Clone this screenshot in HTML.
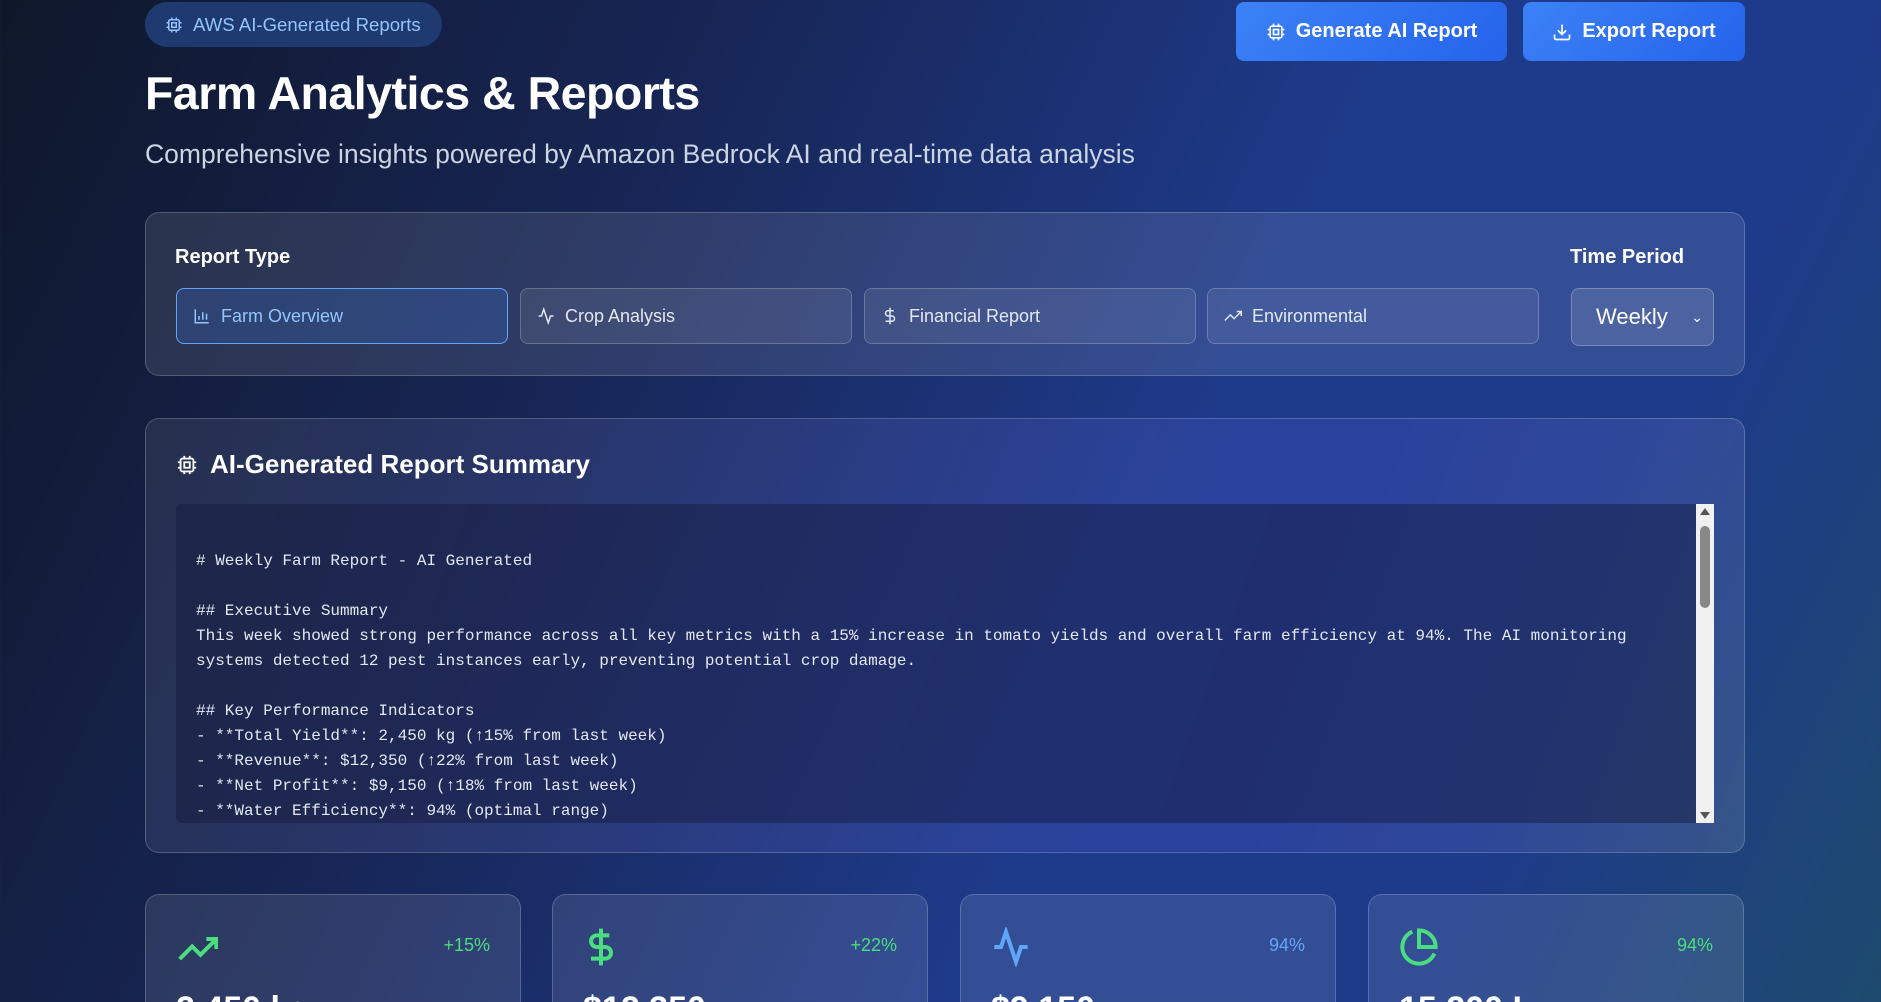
<!DOCTYPE html>
<html><head><meta charset="utf-8"><style>
*{box-sizing:border-box;margin:0;padding:0}
html,body{width:1881px;height:1002px;overflow:hidden}
body{font-family:"Liberation Sans",sans-serif;color:#fff;position:relative;
background:linear-gradient(115deg,#0f172a 0%,#172554 30%,#1e3a8a 60%,#1e3a8a 80%,#1e4a6e 100%);}
.a{position:absolute}
.badge{left:145px;top:2px;width:297px;height:45px;border-radius:23px;background:#1e3a70;color:#93c5fd;font-size:18.6px;display:flex;align-items:center;padding-left:20px;gap:10px;white-space:nowrap}
h1{position:absolute;left:145px;top:66px;font-size:46.5px;font-weight:700;letter-spacing:-0.5px}
.sub{left:145px;top:139px;font-size:26.5px;color:#cbd5e1;white-space:nowrap}
.btn{top:2px;height:59px;border-radius:8px;background:linear-gradient(135deg,#3b82f6,#2563eb);display:flex;align-items:center;justify-content:center;gap:10px;font-size:20px;font-weight:700}
.panel{left:145px;width:1600px;border-radius:14px;background:rgba(255,255,255,0.1);border:1px solid rgba(255,255,255,0.2)}
.lbl{font-size:20px;font-weight:700}
.tab{top:288px;width:332px;height:56px;border-radius:8px;background:rgba(255,255,255,0.08);border:1px solid rgba(255,255,255,0.22);display:flex;align-items:center;padding-left:16px;gap:10px;font-size:18px;color:#e2e8f0}
.tab.on{background:rgba(59,130,246,0.2);border-color:#60a5fa;color:#93c5fd}
.sel{left:1571px;top:288px;width:143px;height:58px;border-radius:8px;background:rgba(255,255,255,0.12);border:1px solid rgba(255,255,255,0.25);font-size:22px;display:flex;align-items:center;padding-left:24px}
pre{position:absolute;left:176px;top:504px;width:1538px;height:319px;background:rgba(20,25,60,0.45);border-radius:6px;font-family:"Liberation Mono",monospace;font-size:16px;line-height:25px;color:#e2e8f0;padding:20px 20px;overflow:hidden}
.sb{left:1696px;top:504px;width:18px;height:319px;background:#f1f1f1}
.card{top:894px;width:376px;height:140px;border-radius:14px;background:rgba(255,255,255,0.1);border:1px solid rgba(255,255,255,0.2)}
.pct{position:absolute;right:30px;top:40px;font-size:18px}
.val{position:absolute;left:30px;top:95px;font-size:34px;font-weight:700}
</style></head><body>
<div class="a badge"><svg width="18" height="18" viewBox="0 0 24 24" fill="none" stroke="#93c5fd" stroke-width="2"><rect x="5" y="5" width="14" height="14" rx="2"/><rect x="9" y="9" width="6" height="6"/><path d="M9 2v3M15 2v3M9 19v3M15 19v3M2 9h3M2 15h3M19 9h3M19 15h3"/></svg>AWS AI-Generated Reports</div>
<h1>Farm Analytics &amp; Reports</h1>
<div class="a sub">Comprehensive insights powered by Amazon Bedrock AI and real-time data analysis</div>
<div class="a btn" style="left:1236px;width:271px"><svg width="20" height="20" viewBox="0 0 24 24" fill="none" stroke="#fff" stroke-width="2"><rect x="5" y="5" width="14" height="14" rx="2"/><rect x="9" y="9" width="6" height="6"/><path d="M9 2v3M15 2v3M9 19v3M15 19v3M2 9h3M2 15h3M19 9h3M19 15h3"/></svg>Generate AI Report</div>
<div class="a btn" style="left:1523px;width:222px"><svg width="20" height="20" viewBox="0 0 24 24" fill="none" stroke="#fff" stroke-width="2"><path d="M21 15v4a2 2 0 0 1-2 2H5a2 2 0 0 1-2-2v-4M7 10l5 5 5-5M12 15V3"/></svg>Export Report</div>

<div class="a panel" style="top:212px;height:164px"></div>
<div class="a lbl" style="left:175px;top:246px">Report Type</div>
<div class="a lbl" style="left:1570px;top:246px">Time Period</div>
<div class="a tab on" style="left:176px"><svg width="18" height="18" viewBox="0 0 24 24" fill="none" stroke="#93c5fd" stroke-width="2"><path d="M3 3v18h18M8 17v-5M13 17V7M18 17v-8"/></svg>Farm Overview</div>
<div class="a tab" style="left:520px"><svg width="18" height="18" viewBox="0 0 24 24" fill="none" stroke="#e2e8f0" stroke-width="2"><path d="M22 12h-4l-3 9L9 3l-3 9H2"/></svg>Crop Analysis</div>
<div class="a tab" style="left:864px"><svg width="18" height="18" viewBox="0 0 24 24" fill="none" stroke="#e2e8f0" stroke-width="2"><path d="M12 1v22M17 5H9.5a3.5 3.5 0 0 0 0 7h5a3.5 3.5 0 0 1 0 7H6"/></svg>Financial Report</div>
<div class="a tab" style="left:1207px"><svg width="18" height="18" viewBox="0 0 24 24" fill="none" stroke="#e2e8f0" stroke-width="2"><path d="M23 6l-9.5 9.5-5-5L1 18M17 6h6v6"/></svg>Environmental</div>
<div class="a sel">Weekly<span style="position:absolute;right:10px;font-size:14px">&#8964;</span></div>

<div class="a panel" style="top:418px;height:435px;background:linear-gradient(110deg,rgba(255,255,255,0.08),rgba(99,102,241,0.18) 70%,rgba(255,255,255,0.1))"></div>
<svg class="a" style="left:176px;top:454px" width="22" height="22" viewBox="0 0 24 24" fill="none" stroke="#fff" stroke-width="2"><rect x="5" y="5" width="14" height="14" rx="2"/><rect x="9" y="9" width="6" height="6"/><path d="M9 2v3M15 2v3M9 19v3M15 19v3M2 9h3M2 15h3M19 9h3M19 15h3"/></svg>
<div class="a" style="left:210px;top:449px;font-size:26px;font-weight:700">AI-Generated Report Summary</div>
<pre>&#8203;
# Weekly Farm Report - AI Generated

## Executive Summary
This week showed strong performance across all key metrics with a 15% increase in tomato yields and overall farm efficiency at 94%. The AI monitoring
systems detected 12 pest instances early, preventing potential crop damage.

## Key Performance Indicators
- **Total Yield**: 2,450 kg (↑15% from last week)
- **Revenue**: $12,350 (↑22% from last week)
- **Net Profit**: $9,150 (↑18% from last week)
- **Water Efficiency**: 94% (optimal range)</pre>
<div class="a sb"><div style="position:absolute;left:4px;top:22px;width:10px;height:82px;background:#888;border-radius:5px"></div><div style="position:absolute;left:4px;top:4px;border:5px solid transparent;border-bottom:7px solid #555;border-top:0"></div><div style="position:absolute;left:4px;bottom:4px;border:5px solid transparent;border-top:7px solid #555;border-bottom:0"></div></div>

<div class="a card" style="left:145px"><svg class="a" style="left:32px;top:34px" width="40" height="40" viewBox="0 0 24 24" fill="none" stroke="#4ade80" stroke-width="2.4"><path d="M23 6l-9.5 9.5-5-5L1 18M17 6h6v6"/></svg><div class="pct" style="color:#4ade80">+15%</div><div class="val">2,450 kg</div></div>
<div class="a card" style="left:552px"><svg class="a" style="left:28px;top:30px" width="40" height="44" viewBox="0 0 24 24" fill="none" stroke="#4ade80" stroke-width="2.4"><path d="M12 1v22M17 5H9.5a3.5 3.5 0 0 0 0 7h5a3.5 3.5 0 0 1 0 7H6"/></svg><div class="pct" style="color:#4ade80">+22%</div><div class="val">$12,350</div></div>
<div class="a card" style="left:960px"><svg class="a" style="left:30px;top:32px" width="40" height="40" viewBox="0 0 24 24" fill="none" stroke="#60a5fa" stroke-width="2.4"><path d="M22 12h-4l-3 9L9 3l-3 9H2"/></svg><div class="pct" style="color:#60a5fa">94%</div><div class="val">$9,150</div></div>
<div class="a card" style="left:1368px"><svg class="a" style="left:30px;top:32px" width="40" height="40" viewBox="0 0 24 24" fill="none" stroke="#4ade80" stroke-width="2.4"><path d="M21.2 15.9A10 10 0 1 1 8 2.8M22 12A10 10 0 0 0 12 2v10z"/></svg><div class="pct" style="color:#4ade80">94%</div><div class="val">15,200 L</div></div>
</body></html>
